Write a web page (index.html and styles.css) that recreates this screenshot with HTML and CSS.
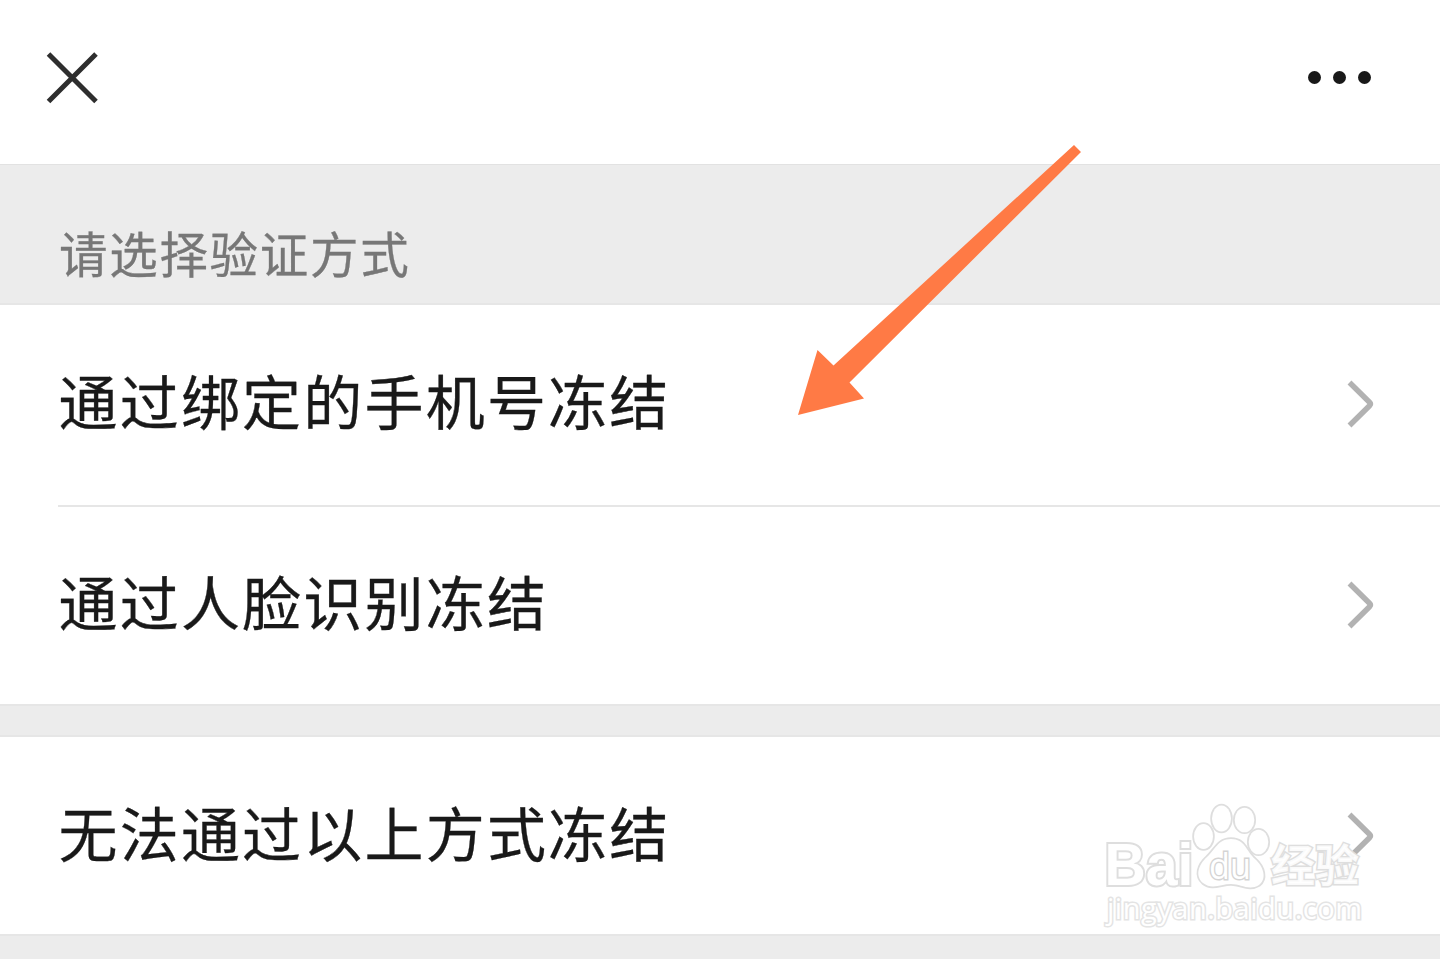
FILE: index.html
```html
<!DOCTYPE html>
<html lang="zh-CN">
<head>
  <meta charset="UTF-8" />
  <meta name="viewport" content="width=device-width, initial-scale=1.0" />
  <title>请选择验证方式</title>
  <link rel="stylesheet" href="styles.css">
</head>
<body>
  <header class="navbar">
    <svg class="close" viewBox="0 0 52 52">
      <path d="M2.500 2L50 49.500M50 2L2.500 49.500" />
    </svg>
    <div class="more"><i></i><i></i><i></i></div>
  </header>

  <main>
    <h1 class="section-title">请选择验证方式</h1>
    <ul class="list">
      <li class="row">
        <span>通过绑定的手机号冻结</span>
        <svg class="chevron" viewBox="0 0 28 48"><path d="M2.500 2.500L22.500 22.300Q24.200 24 22.500 25.700L2.500 45.500" /></svg>
      </li>
      <li class="row">
        <span>通过人脸识别冻结</span>
        <svg class="chevron" viewBox="0 0 28 48"><path d="M2.500 2.500L22.500 22.300Q24.200 24 22.500 25.700L2.500 45.500" /></svg>
      </li>
    </ul>
    <ul class="list other">
      <li class="row">
        <span>无法通过以上方式冻结</span>
        <svg class="chevron" viewBox="0 0 28 48"><path d="M2.500 2.500L22.500 22.300Q24.200 24 22.500 25.700L2.500 45.500" /></svg>
      </li>
    </ul>
  </main>

  <svg class="arrow" viewBox="0 0 284 272">
    <path d="M276 0L283 7L51.500 237.500L66 253.500L0 270L19.500 205L35.500 220.500Z" />
  </svg>

  <svg class="watermark" viewBox="0 0 270 130">
    <g class="paw">
      <ellipse cx="103.500" cy="36.500" rx="9.500" ry="12.500" />
      <ellipse cx="121.500" cy="18.500" rx="9.500" ry="13" />
      <ellipse cx="144.500" cy="20" rx="9.800" ry="12.300" />
      <ellipse cx="158.500" cy="42" rx="9.800" ry="12.300" />
      <path d="M131 39C118 39 115 50 107 57C98 65 95 76 103 83C112 90 121 84 131 84C141 84 149 91 159 85C167 79 164 67 155 59C146 51 145 39 131 39Z" />
    </g>
    <text class="brand" x="4.500" y="85" textLength="89" lengthAdjust="spacingAndGlyphs">Bai</text>
    <text class="du" x="109" y="79" textLength="42" lengthAdjust="spacingAndGlyphs">du</text>
    <text class="jingyan" x="171" y="82" textLength="88">经验</text>
    <text class="site" x="7" y="119" textLength="255">jingyan.baidu.com</text>
  </svg>
</body>
</html>
```

FILE: styles.css
```css
* {
  box-sizing: border-box;
}
body {
  margin: 0;
  height: 959px;
  overflow: hidden;
  position: relative;
  background: #ececec;
  color: #191919;
  font-family: "Noto Sans CJK SC", sans-serif;
}
.navbar {
  display: flex;
  align-items: center;
  justify-content: space-between;
  height: 164px;
  padding: 0 69px 9px 46px;
  background: #fff;
}
.close {
  width: 52px;
  height: 52px;
  fill: none;
  stroke: #2e2e2e;
  stroke-width: 5;
}
.more {
  display: flex;
  gap: 12px;
}
.more i {
  width: 13px;
  height: 13px;
  border-radius: 50%;
  background: #191919;
}
.section-title {
  margin: 0;
  height: 139px;
  padding: 51px 59px 0;
  border-top: 1px solid #e2e2e2;
  color: #777;
  font-size: 48.5px;
  font-weight: 400;
  line-height: 72px;
  letter-spacing: 1.7px;
  -webkit-text-stroke: 0.3px #777;
}
.list {
  margin: 0;
  padding: 0;
  list-style: none;
  background: #fff;
  border-top: 2px solid #e6e6e6;
  border-bottom: 2px solid #e6e6e6;
}
.row {
  display: flex;
  align-items: center;
  justify-content: space-between;
  height: 200px;
  padding: 0 65px 2px 58px;
  font-size: 59px;
  letter-spacing: 2.2px;
  line-height: 84px;
}
.row span {
  padding-left: 0.5px;
  padding-bottom: 8px;
  -webkit-text-stroke: 0.3px #191919;
}
.row + .row {
  height: 199px;
  margin-left: 58px;
  padding-left: 0;
  padding-bottom: 2px;
  border-top: 2px solid #e6e6e6;
}
.other {
  margin-top: 29px;
}
.other .row {
  height: 197px;
  padding-bottom: 0;
}
.chevron {
  width: 28px;
  height: 48px;
  fill: none;
  stroke: #b2b2b2;
  stroke-width: 5.5;
}
.arrow {
  position: absolute;
  left: 798px;
  top: 145px;
  width: 284px;
  height: 272px;
  fill: #ff7a45;
}
.watermark {
  position: absolute;
  left: 1100px;
  top: 800px;
  width: 270px;
  height: 130px;
  fill: #fff;
  stroke: #dedede;
  stroke-width: 2;
  paint-order: stroke;
}
.paw {
  stroke-width: 3.5;
}
.brand {
  font: bold 59px "Liberation Sans", sans-serif;
  stroke-width: 4;
}
.du {
  font: 37px "Open Sans", sans-serif;
  stroke: #d4d4d4;
  stroke-width: 3;
}
.jingyan {
  font: 700 44px "Noto Sans CJK SC", sans-serif;
  stroke-width: 3;
  fill-opacity: 0.9;
}
.site {
  font: 29px "Open Sans", sans-serif;
  stroke: #e4e4e4;
  stroke-width: 3;
}
```
